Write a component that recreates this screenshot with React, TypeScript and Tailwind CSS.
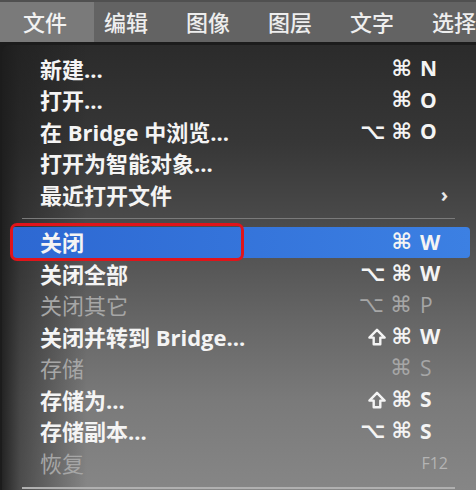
import React from "react";

type Item = {
  label: string;
  mods?: string[];
  key?: string;
  extra?: string;
  arrow?: boolean;
  disabled?: boolean;
  selected?: boolean;
};

const group1: Item[] = [
  { label: "新建...", mods: ["⌘"], key: "N" },
  { label: "打开...", mods: ["⌘"], key: "O" },
  { label: "在 Bridge 中浏览...", mods: ["⌥", "⌘"], key: "O" },
  { label: "打开为智能对象..." },
  { label: "最近打开文件", arrow: true },
];

const group2: Item[] = [
  { label: "关闭", mods: ["⌘"], key: "W", selected: true },
  { label: "关闭全部", mods: ["⌥", "⌘"], key: "W" },
  { label: "关闭其它", mods: ["⌥", "⌘"], key: "P", disabled: true },
  { label: "关闭并转到 Bridge...", mods: ["⇧", "⌘"], key: "W" },
  { label: "存储", mods: ["⌘"], key: "S", disabled: true },
  { label: "存储为...", mods: ["⇧", "⌘"], key: "S" },
  { label: "存储副本...", mods: ["⌥", "⌘"], key: "S" },
  { label: "恢复", extra: "F12", disabled: true },
];

const font = { fontFamily: '"Open Sans", "Noto Sans CJK SC", "DejaVu Sans", sans-serif' };

function Shift() {
  return (
    <svg width="18" height="18" viewBox="0 0 18 18" className="block">
      <path
        d="M9 1.8 L16.6 9.6 H12.3 V16.2 H5.7 V9.6 H1.4 Z"
        fill="none"
        stroke="currentColor"
        strokeWidth="2.4"
        strokeLinejoin="round"
      />
    </svg>
  );
}

function Row({ item }: { item: Item }) {
  const color = item.disabled ? "text-[#a6a6a6] font-normal" : "text-[#f4f4f4] font-bold";
  return (
    <div
      className={
        "relative ml-[9px] mr-[6px] h-[31.5px] flex items-center justify-between pl-[29px] pr-[28px] rounded-[4px] " +
        (item.selected ? "bg-[linear-gradient(to_right,#2d68d2,#3c80e3)]" : "")
      }
    >
      {item.selected && (
        <div className="absolute left-[-1px] top-[-4px] w-[234px] h-[38px] rounded-[7px] border-[3px] border-[#e0141a]" />
      )}
      <span className={"relative text-[22px] leading-none whitespace-nowrap " + color}>{item.label}</span>
      {item.mods ? (
        <span className={"flex items-center leading-none " + color}>
          <span
            className="mr-[8px] flex items-center gap-[6px] text-[22px]"
            style={{ fontFamily: '"DejaVu Sans", sans-serif' }}
          >
            {item.mods.map((m, i) => (m === "⇧" ? <Shift key={i} /> : <span key={i}>{m}</span>))}
          </span>
          <span className="w-[22px] text-[21px]">{item.key}</span>
        </span>
      ) : item.extra ? (
        <span className="mr-[-6px] text-[16px] leading-none text-[#b4b4b4]">{item.extra}</span>
      ) : item.arrow ? (
        <span className="mr-[-6px] text-[20px] leading-none text-[#e8e8e8] font-bold">›</span>
      ) : (
        <span />
      )}
    </div>
  );
}

export default function App() {
  const bar = ["编辑", "图像", "图层", "文字", "选择"];
  return (
    <div className="w-[476px] h-[490px] overflow-hidden bg-[#1c1c1c]" style={font}>
      <div className="h-[42px] flex items-stretch bg-[#636363] border-t-2 border-[#505050]">
        <div className="w-[95px] pl-[23px] flex items-center bg-[#7a7a7a] text-[22px] text-[#f2f2f2] font-medium leading-none">
          文件
        </div>
        <div className="flex items-center gap-[38px] pl-[10px] text-[22px] text-[#eeeeee] font-medium leading-none whitespace-nowrap">
          {bar.map((b) => (
            <span key={b}>{b}</span>
          ))}
        </div>
      </div>
      <div className="mt-[3px] ml-[2px] h-[445px] rounded-tl-[7px] pt-[8px] bg-[linear-gradient(to_right,rgba(28,28,28,0.92),rgba(28,28,28,0.55)_18px,rgba(28,28,28,0)_85px),linear-gradient(to_bottom,#2b2b2b_0%,#373737_22%,#4d4d4d_42%,#666666_62%,#7a7a7a_80%,#868686_100%)]">
        {group1.map((it) => (
          <Row key={it.label} item={it} />
        ))}
        <div className="mt-[7px] mb-[8px] ml-[20px] mr-[21px] h-px bg-[#7a7a7a]" />
        {group2.map((it) => (
          <Row key={it.label} item={it} />
        ))}
        <div className="mt-[8px] ml-[20px] mr-[21px] h-[2px] bg-[#b0b0b0]" />
      </div>
    </div>
  );
}
